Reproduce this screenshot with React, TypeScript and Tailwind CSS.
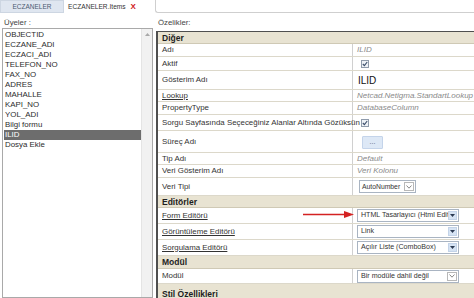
import React from "react";

const font = "font-['Liberation_Sans',Arial,sans-serif]";

const items = [
  "OBJECTID",
  "ECZANE_ADI",
  "ECZACI_ADI",
  "TELEFON_NO",
  "FAX_NO",
  "ADRES",
  "MAHALLE",
  "KAPI_NO",
  "YOL_ADI",
  "Bilgi formu",
  "ILID",
  "Dosya Ekle",
];

function Check() {
  return (
    <div className="w-[8px] h-[8px] border border-[#8f9bab] bg-[#eef2f7] flex items-center justify-center">
      <svg width="6" height="6" viewBox="0 0 6 6">
        <path d="M0.8 3 L2.4 4.6 L5.2 1" stroke="#3d4f6b" strokeWidth="1.1" fill="none" />
      </svg>
    </div>
  );
}

function Select({ text, w, gray, small }: { text: string; w: string; gray?: boolean; small?: boolean }) {
  return (
    <div className={`flex items-center h-[13px] border border-[#a9b4c2] bg-white ${w}`}>
      <div
        className={`flex-1 overflow-hidden whitespace-nowrap ${small ? "pl-[2px] text-[6.8px]" : "pl-[3px] text-[7.1px]"} leading-[11px] text-[#333]`}
      >
        {text}
      </div>
      {gray ? (
        <div className="w-[10px] h-[9px] mr-[1px] border border-[#b8b8b8] bg-white flex items-center justify-center shrink-0">
          <svg width="6" height="4" viewBox="0 0 6 4">
            <path d="M0.5 0.5 L3 3.2 L5.5 0.5" stroke="#888" strokeWidth="1" fill="none" />
          </svg>
        </div>
      ) : (
        <div className="w-[9px] h-[9px] mr-[1px] bg-[#d6e3f3] border border-[#c3d3e8] flex items-center justify-center shrink-0">
          <svg width="5" height="3" viewBox="0 0 5 3">
            <path d="M0 0 L5 0 L2.5 3 Z" fill="#2b3a52" />
          </svg>
        </div>
      )}
    </div>
  );
}

function Header({ text, h, top }: { text: string; h: string; top?: boolean }) {
  return (
    <div
      className={`${h} shrink-0 bg-[#e8e3d2] border-b border-[#cfc9b5] flex ${top ? "items-start pt-[5px]" : "items-center"} pl-[4px] text-[8.5px] leading-[10px] font-bold text-[#1e1e1e]`}
    >
      {text}
    </div>
  );
}

function Row({
  label,
  h,
  link,
  top,
  children,
}: {
  label: string;
  h: string;
  link?: boolean;
  top?: boolean;
  children?: React.ReactNode;
}) {
  return (
    <div className={`${h} shrink-0 flex border-b border-[#dcd8ca] bg-white`}>
      <div
        className={`w-[195px] border-r border-[#d0d0d0] flex ${top ? "items-start pt-[5px]" : "items-center"} pl-[4px] text-[7.9px] text-[#333] whitespace-nowrap`}
      >
        <span className={link ? "underline" : ""}>{label}</span>
      </div>
      <div className="flex-1 flex items-center pl-[4px] text-[8px] whitespace-nowrap overflow-hidden">{children}</div>
    </div>
  );
}

function Val({ t }: { t: string }) {
  return <span className="italic text-[#8a8a8a]">{t}</span>;
}

export default function App() {
  return (
    <div className={`w-[474px] h-[298px] overflow-hidden bg-white relative ${font}`}>
      <div className="flex h-full">
        {/* Left column */}
        <div className="w-[155px] flex flex-col shrink-0">
          <div className="h-[13px] flex shrink-0">
            <div className="w-[64px] bg-[#dfe6f0] border border-[#cdd6e2] flex items-center justify-center text-[6.5px] text-[#4d5b70]">
              ECZANELER
            </div>
            <div className="w-[76px] bg-white flex items-center justify-center gap-[5px] text-[6.6px] text-[#333] whitespace-nowrap">
              <span>ECZANELER.Items</span>
              <span className="text-[#d01a1a] font-bold text-[8px]">X</span>
            </div>
          </div>
          <div className="h-[15px] shrink-0 pl-[4px] pt-[5px] text-[7.8px] leading-[9px] text-[#444]">Üyeler :</div>
          <div className="ml-[2px] w-[151px] flex-1 border border-[#a9a9a9] flex">
            <div className="flex-1 pl-[1px] pt-[1px]">
              {items.map((it) => (
                <div
                  key={it}
                  className={`h-[10px] leading-[10px] pl-[1px] text-[7.9px] ${it === "ILID" ? "bg-[#6d6d6d] text-white" : "text-[#2c2c2c]"}`}
                >
                  {it}
                </div>
              ))}
            </div>
            <div className="w-[11px] bg-[#f1f1f1] border-l border-[#e4e4e4] flex flex-col items-center pt-[4px]">
              <svg width="5" height="3" viewBox="0 0 5 3">
                <path d="M0 3 L5 3 L2.5 0 Z" fill="#a8a8a8" />
              </svg>
            </div>
          </div>
        </div>

        {/* Right column */}
        <div className="flex-1 flex flex-col">
          <div className="h-[13px] shrink-0 border-l border-b border-[#cfcfcf] rounded-bl-[3px]" />
          <div className="h-[18px] shrink-0 pl-[3px] pt-[5px] text-[7.8px] leading-[9px] text-[#444]">Özelikler:</div>
          <div className="ml-[1px] flex-1 border-l-2 border-t border-[#4f4f4f] flex flex-col">
            <Header text="Diğer" h="h-[12px]" />
            <Row label="Adı" h="h-[13px]">
              <Val t="ILID" />
            </Row>
            <Row label="Aktif" h="h-[14px]">
              <div className="pl-[4px]">
                <Check />
              </div>
            </Row>
            <Row label="Gösterim Adı" h="h-[19px]">
              <span className="text-[10px] text-[#111] pl-[1px]">ILID</span>
            </Row>
            <Row label="Lookup" h="h-[12px]" link>
              <Val t="Netcad.Netigma.StandartLookup" />
            </Row>
            <Row label="PropertyType" h="h-[13px]">
              <Val t="DatabaseColumn" />
            </Row>
            <Row label="Sorgu Sayfasında Seçeceğiniz Alanlar Altında Gözüksün" h="h-[16px]">
              <div className="pl-[4px]">
                <Check />
              </div>
            </Row>
            <Row label="Süreç Adı" h="h-[22px]" top>
              <div className="ml-[5px] mt-[2px] w-[21px] h-[13px] bg-[#dde8f6] border border-[#c4d4ea] rounded-[1px] flex items-center justify-center text-[7px] leading-none text-[#4a5a72] pb-[2px]">
                ...
              </div>
            </Row>
            <Row label="Tip Adı" h="h-[12px]">
              <Val t="Default" />
            </Row>
            <Row label="Veri Gösterim Adı" h="h-[13px]">
              <Val t="Veri Kolonu" />
            </Row>
            <Row label="Veri Tipi" h="h-[18px]">
              <div className="pl-[2px]">
                <Select text="AutoNumber" w="w-[57px]" gray small />
              </div>
            </Row>
            <Header text="Editörler" h="h-[12px]" />
            <Row label="Form Editörü" h="h-[16px]" link>
              <Select text="HTML Tasarlayıcı (Html Editör)" w="w-[102px]" />
            </Row>
            <Row label="Görüntüleme Editörü" h="h-[16px]" link>
              <Select text="Link" w="w-[102px]" />
            </Row>
            <Row label="Sorgulama Editörü" h="h-[16px]" link>
              <Select text="Açılır Liste (ComboBox)" w="w-[102px]" />
            </Row>
            <Header text="Modül" h="h-[13px]" />
            <Row label="Modül" h="h-[15px]">
              <Select text="Bir modüle dahil değil" w="w-[102px]" gray />
            </Row>
            <Header text="Stil Özellikleri" h="h-[22px]" top />
          </div>
        </div>
      </div>

      {/* annotation arrow */}
      <svg className="absolute left-[303px] top-[210px]" width="52" height="9" viewBox="0 0 52 9">
        <line x1="0" y1="4.5" x2="43" y2="4.5" stroke="#d42222" strokeWidth="1.3" />
        <path d="M41 1 L51 4.5 L41 8 Z" fill="#d42222" />
      </svg>
    </div>
  );
}
